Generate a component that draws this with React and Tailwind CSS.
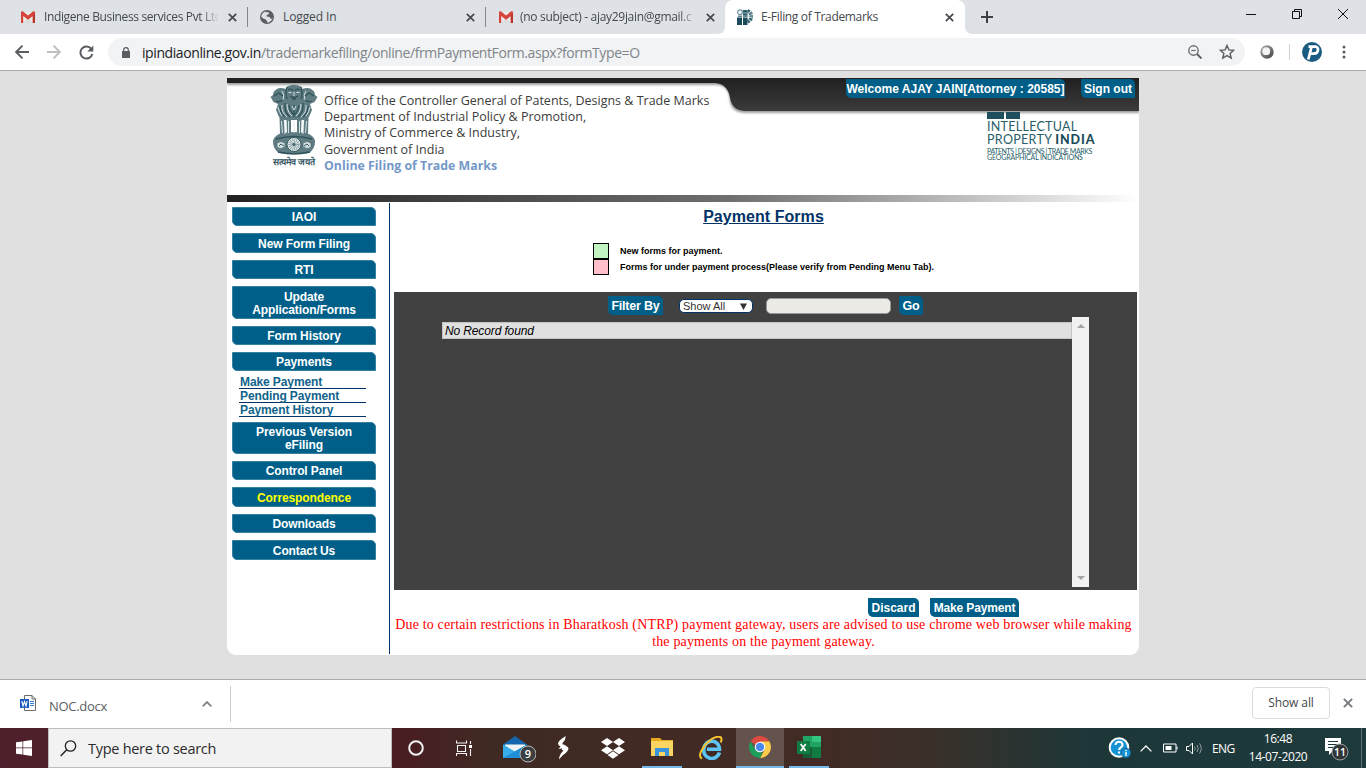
import React from "react";

const pill = "bg-[#005f89] text-white font-bold rounded-tr-[5px] rounded-bl-[5px] whitespace-nowrap text-center h-[19px] pt-px leading-[18px]";

function Gmail() {
  return (
    <svg width="16" height="14" viewBox="0 0 16 14" className="shrink-0">
      <path d="M1 2h14v11H1z" fill="#ececec" />
      <path d="M3 13l5-5 5 5z" fill="#dcdcdc" />
      <path d="M1 2.500v10.500h2.200V6L8 9.800 12.800 6v7H15V2.500C15 1 13.400 1 12.600 1.700L8 5.500 3.400 1.700C2.600 1 1 1 1 2.500z" fill="#d5443a" />
      <path d="M12.800 6v7H15V3z" fill="#b8332a" />
    </svg>
  );
}

function X({ c = "#45494d", w = 9 }) {
  return (
    <svg width={w} height={w} viewBox="0 0 9 9" className="shrink-0">
      <path d="M.8.8l7.400 7.400M8.200.8L.8 8.200" stroke={c} strokeWidth="1.700" />
    </svg>
  );
}

function TabTitle({ children, className }) {
  return <span className={"whitespace-nowrap text-[12px] text-[#45494d] " + className}>{children}</span>;
}

function TabStrip() {
  return (
    <div className="flex h-[34px] bg-[#dee1e6]">
      <div className="flex w-[248px] items-center pl-5">
        <Gmail />
        <TabTitle className="ml-2 w-[175px] tracking-[-0.37px] [mask-image:linear-gradient(to_right,black_90%,transparent)]">Indigene Business services Pvt Ltd</TabTitle>
        <span className="ml-[9px] flex"><X /></span>
        <span className="ml-[10px] h-5 w-px shrink-0 bg-[#85888c]" />
      </div>
      <div className="flex w-[238px] items-center pl-3">
        <svg width="14" height="14" viewBox="0 0 14 14" className="shrink-0">
          <circle cx="7" cy="7" r="7" fill="#5a5e63" />
          <path d="M5.500 1.500C7 3 9.500 1.500 9 3.500 8.500 5 6.500 4.500 6.500 6c0 1 2 .5 3 1s.5 2 1.500 2c.8 0 1.300-.8 1.700-1.700C12.500 10 10 12.600 7.300 12.700 8 11.500 6.500 11 6 10 5.500 8.700 4 9 3 8.200 2 7.400 1.300 7 1.300 6.500 1.500 4 3.300 2.200 5.500 1.500z" fill="#dee1e6" />
        </svg>
        <TabTitle className="ml-[9px] w-[174px] tracking-[-0.1px]">Logged In</TabTitle>
        <span className="ml-[10px] flex"><X /></span>
        <span className="ml-[10px] h-5 w-px shrink-0 bg-[#85888c]" />
      </div>
      <div className="flex w-[239px] items-center pl-3">
        <Gmail />
        <TabTitle className="ml-[6px] w-[177px] tracking-[-0.3px] [mask-image:linear-gradient(to_right,black_90%,transparent)]">(no subject) - ajay29jain@gmail.c</TabTitle>
        <span className="ml-[9px] flex"><X /></span>
      </div>
      <div className="relative flex w-[240px] items-center rounded-t-lg bg-white pl-3">
        <svg width="256" height="8" viewBox="0 0 256 8" className="absolute -left-2 bottom-0"><path d="M8 0v8H0Q8 8 8 0zM248 0v8h8Q248 8 248 0z" fill="#fff" /></svg>
        <svg width="16" height="16" viewBox="0 0 16 16" className="shrink-0">
          <path d="M0 8.500h5V16H0zM6 8.500h4.500V16H6z" fill="#1c4a5a" />
          <path d="M6 1h4.500v7H6z" fill="#2c5d6c" />
          <circle cx="3" cy="3.200" r="2.300" fill="none" stroke="#6d909c" strokeWidth="1.200" />
          <path d="M1 7.200h4" stroke="#35616f" strokeWidth="1.200" />
          <path d="M10.500 2a5.500 5.500 0 010 10.500" fill="none" stroke="#35616f" strokeWidth="3.800" strokeDasharray="2.200 .7" />
          <path d="M6 4h10M6 7h10" stroke="#a9c0c8" strokeWidth=".8" />
        </svg>
        <TabTitle className="ml-2 w-[180px] tracking-[-0.33px]">E-Filing of Trademarks</TabTitle>
        <span className="ml-[4px] flex"><X /></span>
      </div>
      <div className="flex flex-1 items-center pl-4">
        <svg width="12" height="12" viewBox="0 0 12 12"><path d="M6 0v12M0 6h12" stroke="#3c4043" strokeWidth="2" /></svg>
        <div className="mb-[6px] ml-auto mr-[18px] flex items-center">
          <svg width="10" height="10" viewBox="0 0 10 10"><path d="M0 5.500h10" stroke="#111" /></svg>
          <svg width="10" height="10" viewBox="0 0 10 10" className="ml-9"><path d="M.5 2.500h7v7h-7zM2.500 2.500v-2h7v7h-2" fill="none" stroke="#111" /></svg>
          <svg width="10" height="10" viewBox="0 0 10 10" className="ml-9"><path d="M0 0l10 10M10 0L0 10" stroke="#111" /></svg>
        </div>
      </div>
    </div>
  );
}

function Toolbar() {
  return (
    <div className="flex h-[37px] items-center border-b border-[#a9abad] bg-white pl-[15px]">
      <svg width="14" height="14" viewBox="0 0 14 14"><path d="M14 7H1.500M7.500.7L1.200 7l6.300 6.300" fill="none" stroke="#5a5e63" strokeWidth="1.900" /></svg>
      <svg width="14" height="14" viewBox="0 0 14 14" className="ml-[18px]"><path d="M0 7h12.500M6.500.7L12.800 7l-6.300 6.300" fill="none" stroke="#bcbec0" strokeWidth="1.900" /></svg>
      <svg width="15" height="15" viewBox="0 0 15 15" className="ml-[18px]">
        <path d="M12.300 4A6 6 0 1013.300 9" fill="none" stroke="#5a5e63" strokeWidth="2" />
        <path d="M14.300.5v6H8.300z" fill="#5a5e63" />
      </svg>
      <div className="ml-[14px] flex h-7 w-[1137px] items-center rounded-full bg-[#f1f3f4] pl-[14px]">
        <svg width="8" height="11" viewBox="0 0 8 11">
          <path d="M0 4h8v7H0z" fill="#5a5e63" /><path d="M1.700 4.500V3a2.300 2.300 0 014.600 0v1.500" fill="none" stroke="#5a5e63" strokeWidth="1.200" />
        </svg>
        <span className="ml-3 whitespace-nowrap text-[14px] tracking-[-0.41px] text-[#80858a]"><span className="text-[#202124]">ipindiaonline.gov.in</span>/trademarkefiling/online/frmPaymentForm.aspx?formType=O</span>
        <svg width="14" height="14" viewBox="0 0 14 14" className="ml-auto">
          <circle cx="5.500" cy="5.500" r="4.700" fill="none" stroke="#6a6e72" strokeWidth="1.400" /><path d="M9 9l4.500 4.500" stroke="#5a5e63" strokeWidth="1.900" /><path d="M3.200 5.500h4.600" stroke="#6a6e72" strokeWidth="1.200" />
        </svg>
        <svg width="16" height="16" viewBox="0 0 16 16" className="ml-[17px] mr-[10px]">
          <path d="M8 1.500l1.900 4.400 4.800.4-3.600 3.100 1.100 4.700L8 11.600l-4.200 2.500 1.100-4.700L1.300 6.300l4.800-.4z" fill="none" stroke="#5a5e63" strokeWidth="1.400" />
        </svg>
      </div>
      <svg width="14" height="14" viewBox="0 0 14 14" className="ml-[15px]">
        <defs><linearGradient id="ring" x1="0" y1="0" x2="1" y2="1"><stop stopColor="#b0b0b0" /><stop offset="1" stopColor="#3f3f3f" /></linearGradient></defs>
        <circle cx="7" cy="7" r="6.700" fill="url(#ring)" /><circle cx="6.200" cy="6.200" r="3.900" fill="#f4f4f4" />
      </svg>
      <span className="ml-[15px] h-4 w-px bg-[#cfd1d3]" />
      <svg width="20" height="20" viewBox="0 0 20 20" className="ml-3">
        <circle cx="10" cy="10" r="10" fill="#1a5b82" />
        <path d="M6.500 4.600h7c3.700 0 3.400 7-1.500 7H8M9.500 5L6.300 17.500" fill="none" stroke="#fff" strokeWidth="2.700" />
      </svg>
      <svg width="4" height="14" viewBox="0 0 4 14" className="ml-[20px]"><g fill="#5a5e63"><circle cx="2" cy="2" r="1.500" /><circle cx="2" cy="7" r="1.500" /><circle cx="2" cy="12" r="1.500" /></g></svg>
    </div>
  );
}

function Emblem() {
  return (
    <svg width="48" height="72" viewBox="0 0 48 72">
      <g fill="#5f7c82">
        <path d="M17 2.500Q24-1 31 2.500l1.500 5-1 9-3.500 4h-8l-3.500-4-1-9z" />
        <path d="M16 5q-6-2-9 0-4 2-4 6l-2.500 2 3 5 4.500 2-2 6 3 7 5 3h20l5-3 3-7-2-6 4.500-2 3-5L45 11q0-4-4-6-3-2-9 0l-2 13H18z" />
        <path d="M9.500 32h4l1.500 18h-5zM16.500 34h4.500v16h-4zM27 34h4.500L31 50h-4zM34.500 32h4L38 50h-5z" />
        <path d="M9 50q15-4 30 0 6 3 6 8 0 7-6 11-15 3-30 0-6-4-6-11 0-5 6-8z" />
      </g>
      <g fill="none" stroke="#2f525a" strokeWidth="1.300">
        <path d="M18 6q3-2 5 .5M25 6.500Q27 4 30 6M20 12q4 3 8 0M22 15h4M17 3q-2 5 0 12M31 3q2 5 0 12" />
        <path d="M4 12l5-3 4 3M44 12l-5-3-4 3M6 17q5 2 7-2M42 17q-5 2-7-2" />
        <path d="M15 19q-1 9 5 14M33 19q1 9-5 14M19 21q1 7 5 10 4-3 5-10M10 22q0 7 5 11M38 22q0 7-5 11M24 21v12" />
        <path d="M6 55q18-5 36 0M8 68q16 3.500 32 0" strokeWidth="1.700" />
      </g>
      <g fill="none" stroke="#e4edee" strokeWidth=".9">
        <path d="M18.500 8.500h3M26.500 8.500h3M24 8v4M12 7q3 4 1 9M36 7q-3 4-1 9M17 20q0 8 5 12M31 20q0 8-5 12M12 21q-1 7 5 12M36 21q1 7-5 12M8 23q1 5 4 9M40 23q-1 5-4 9M22 22l2 4 2-4" />
        <path d="M11.500 37l1 12M18.500 37v12M29.500 37v12M36.500 37l-1 12M15 36v14M33 36v14M24 36v13" />
      </g>
      <circle cx="24" cy="60.500" r="7" fill="#e5ecee" stroke="#35585f" />
      <circle cx="24" cy="60.500" r="3.800" fill="none" stroke="#8ba3a8" strokeWidth="4" strokeDasharray=".8 .8" />
      <circle cx="24" cy="60.500" r="1.700" fill="#48696f" />
      <path d="M7 59q4-3 8 0v4q-5 3-8 0zM41 59q-4-3-8 0v4q5 3 8 0z" fill="#d5e0e2" stroke="#48696f" strokeWidth=".7" />
      <path d="M9 62l2-2 3 2M39 62l-2-2-3 2" stroke="#35585f" fill="none" />
    </svg>
  );
}

function Header() {
  return (
    <div className="relative h-[124px] w-[912px]">
      <svg width="912" height="40" viewBox="0 0 912 40" className="absolute left-0 top-0">
        <defs>
          <linearGradient id="bar" x1="0" y1="0" x2="0" y2="1"><stop stopColor="#202020" /><stop offset="1" stopColor="#3b3b3b" /></linearGradient>
          <filter id="soft" x="-2%" y="-20%" width="104%" height="150%"><feGaussianBlur stdDeviation="1.200" /></filter>
        </defs>
        <path d="M0 0H912V35H519Q505 35 503 24Q502 7 489 7H0z" fill="#9b9b9b" filter="url(#soft)" />
        <path d="M0 0H912V33H517Q505 32 503 20Q501 6 488 5H0z" fill="url(#bar)" />
      </svg>
      <div className="relative flex">
        <div className="ml-[43px] mt-[6px] flex w-[48px] flex-col items-center">
          <Emblem />
          <span className="whitespace-nowrap text-[9px] leading-[12px] font-bold text-[#35585f]">सत्यमेव जयते</span>
        </div>
        <div className="ml-[6px] mt-[15px] w-[400px] whitespace-nowrap font-['Open_Sans'] text-[12.5px] leading-[16.2px] text-[#3c3c3c]">
          <div>Office of the Controller General of Patents, Designs &amp; Trade Marks</div>
          <div>Department of Industrial Policy &amp; Promotion,</div>
          <div>Ministry of Commerce &amp; Industry,</div>
          <div>Government of India</div>
          <div className="text-[12.35px] font-bold text-[#7498c8]">Online Filing of Trade Marks</div>
        </div>
        <div className="ml-auto flex flex-col pr-[4px] pt-px">
          <div className="flex justify-end gap-[16px] text-[12px]">
            <span className={pill + " w-[219px]"}>Welcome AJAY JAIN[Attorney : 20585]</span>
            <span className={pill + " w-[54px]"}>Sign out</span>
          </div>
          <div className="ml-[141px] mt-[14px] w-[112px] whitespace-nowrap font-[Lato] text-[#286069]">
            <div className="flex gap-[2px]"><span className="h-[7px] w-[17px] bg-[#1f4f5c]" /><span className="h-[7px] w-[14px] bg-[#1f4f5c]" /></div>
            <div className="mt-px text-[12.5px] leading-[13px] tracking-[0.28px]">INTELLECTUAL</div>
            <div className="text-[12.5px] leading-[13px] tracking-[0.32px]">PROPERTY <b className="font-black tracking-[0.9px] text-[#1c4c59]">INDIA</b></div>
            <div className="mt-[2px] text-[7px] leading-[6px] tracking-[-0.42px]">PATENTS | DESIGNS | TRADE MARKS</div>
            <div className="text-[7px] leading-[6px] tracking-[-0.15px]">GEOGRAPHICAL INDICATIONS</div>
          </div>
        </div>
      </div>
      <div className="absolute bottom-0 left-0 h-[7px] w-full bg-linear-to-r from-[#222] via-[#6f6f6f] via-55% to-white" />
    </div>
  );
}

function MenuItem({ children, className = "h-[19px]" }) {
  return (
    <div className={"mb-[7px] flex items-center justify-center rounded-tr-[5px] rounded-bl-[5px] border border-[#3580a1] bg-[#005f89] text-center text-[12px] font-bold leading-[13px] tracking-[-0.1px] text-white " + className}>
      <span className="translate-y-[0.5px]">{children}</span>
    </div>
  );
}

function Sidebar() {
  const link = "h-[14px] border-b border-[#003366] pl-px text-[12px] font-bold leading-[14px] tracking-[-0.1px] text-[#11638b]";
  return (
    <div className="ml-[5px] w-[144px] pt-[5px]">
      <MenuItem>IAOI</MenuItem>
      <MenuItem className="h-[20px]">New Form Filing</MenuItem>
      <MenuItem>RTI</MenuItem>
      <MenuItem className="h-[33px]">Update<br />Application/Forms</MenuItem>
      <MenuItem>Form History</MenuItem>
      <MenuItem>Payments</MenuItem>
      <div className="mb-[5px] ml-[7px] -mt-[4px] w-[127px] pt-px">
        <div className={link}>Make Payment</div>
        <div className={link}>Pending Payment</div>
        <div className={link}>Payment History</div>
      </div>
      <MenuItem className="h-[32px]">Previous Version<br />eFiling</MenuItem>
      <MenuItem>Control Panel</MenuItem>
      <MenuItem className="h-[20px] text-[#ffff00]!">Correspondence</MenuItem>
      <MenuItem>Downloads</MenuItem>
      <MenuItem className="h-[20px]">Contact Us</MenuItem>
    </div>
  );
}

function Main() {
  return (
    <div className="ml-[4px] w-[743px]">
      <h1 className="mt-[5px] pr-[4px] text-center text-[16px] font-bold leading-[20px] tracking-[0.05px] text-[#003366] underline">Payment Forms</h1>
      <div className="ml-[199px] mt-[16px] text-[9px] font-bold leading-4 text-black">
        <div className="flex"><span className="h-4 w-4 border border-black bg-[#c1f4c1]" /><span className="ml-[11px]">New forms for payment.</span></div>
        <div className="flex"><span className="h-4 w-4 border border-black bg-[#ffc0cb]" /><span className="ml-[11px]">Forms for under payment process(Please verify from Pending Menu Tab).</span></div>
      </div>
      <div className="mt-[17px] h-[298px] bg-[#414141]">
        <div className="flex h-[25px] items-center pl-[214px] pt-[3px]">
          <span className={pill + " w-[55px] text-[12.5px] tracking-[-0.2px] -mt-px"}>Filter By</span>
          <div className="ml-[16px] flex h-[14px] w-[74px] items-center rounded-[5px] border border-[#003366] bg-white pl-[3px] text-[11px] leading-[12px] text-[#333]">
            <span className="whitespace-nowrap">Show All</span>
            <svg width="7" height="7" viewBox="0 0 7 7" className="ml-auto mr-[5px]"><path d="M0 .5h7L3.500 7z" fill="#333" /></svg>
          </div>
          <div className="ml-[13px] h-4 w-[125px] rounded-[5px] border border-[#9a9a98] bg-[#ebeae4]" />
          <span className={pill + " ml-[8px] w-[24px] text-[12.5px] tracking-[-0.2px] -mt-px"}>Go</span>
        </div>
        <div className="ml-[48px] flex h-[270px]">
          <div className="mt-[5px] h-[17px] w-[630px] border border-[#c4c4c4] bg-[#e0e0e0] pl-[2px] text-[12px] italic leading-[16px] tracking-[-0.13px] text-black">No Record found</div>
          <div className="flex w-[17px] flex-col items-center justify-between bg-[#f1f1f1] py-[7px]">
            <svg width="8" height="4" viewBox="0 0 8 4"><path d="M0 4h8L4 0z" fill="#a3a3a3" /></svg>
            <svg width="8" height="4" viewBox="0 0 8 4"><path d="M0 0h8L4 4z" fill="#a3a3a3" /></svg>
          </div>
        </div>
      </div>
      <div className="mt-[8px] flex gap-[11px] pl-[474px] text-[12px]">
        <span className={pill + " w-[51px]"}>Discard</span>
        <span className={pill + " w-[89px] tracking-[-0.15px]"}>Make Payment</span>
      </div>
      <p className="-ml-1 -mt-px whitespace-nowrap text-center font-['Liberation_Serif'] text-[14px] leading-[17px] tracking-[0.165px] text-[#ff0000]">
        Due to certain restrictions in Bharatkosh (NTRP) payment gateway, users are advised to use chrome web browser while making<br />the payments on the payment gateway.
      </p>
    </div>
  );
}

function Downloads() {
  return (
    <div className="flex h-[49px] items-center border-t border-[#a9abad] bg-white font-['Open_Sans']">
      <svg width="16" height="16" viewBox="0 0 16 16" className="mb-[3px] ml-5">
        <path d="M4.500.5h7.500l3.500 3.500v11.500h-11z" fill="#fff" stroke="#6b6b6b" /><path d="M12 .5v3.500h3.500" fill="none" stroke="#6b6b6b" />
        <path d="M10 6.500h4M10 8.500h4M10 10.500h4" stroke="#2b7cd3" /><path d="M0 4h9v9H0z" fill="#185abd" />
        <path d="M1.800 6l1.200 5 1.500-4.500L6 11l1.200-5" fill="none" stroke="#fff" strokeWidth="1.100" />
      </svg>
      <span className="ml-[13px] mt-[6px] w-[60px] text-[13px] tracking-[-0.3px] text-[#5a5e63]">NOC.docx</span>
      <svg width="10" height="6" viewBox="0 0 10 6" className="ml-[93px]"><path d="M.7 5.300L5 1l4.300 4.300" fill="none" stroke="#808488" strokeWidth="1.800" /></svg>
      <span className="ml-[18px] h-9 w-px bg-[#c9cbcd]" />
      <span className="ml-auto mb-[2px] flex h-8 w-[78px] items-center justify-center rounded border border-[#dadce0] text-[12px] font-medium tracking-[-0.1px] text-[#45494d]">Show all</span>
      <span className="ml-[13px] mr-[13px] flex pb-[2px]"><X c="#75797d" w={10} /></span>
    </div>
  );
}

const cell = "flex h-10 w-12 items-center justify-center";

function Taskbar() {
  return (
    <div className="flex h-10 items-center bg-[linear-gradient(to_right,#4d202b_0%,#491c22_29%,#3f2a23_36%,#422b24_60%,#3a3029_68%,#1d3739_80%,#1f3a3c_100%)] text-white">
      <div className={cell}>
        <svg width="16" height="16" viewBox="0 0 16 16"><path d="M0 2.300l6.500-.9v6.200H0zM7.200 1.300L16 0v7.600H7.200zM0 8.300h6.500v6.200L0 13.700zM7.200 8.300H16V16l-8.800-1.300z" fill="#fff" /></svg>
      </div>
      <div className="flex h-10 w-[344px] items-center border border-[#bdbdbd] bg-[#f2f2f2] pl-[11px] text-[#2b2b2b]">
        <svg width="17" height="17" viewBox="0 0 17 17"><circle cx="10.500" cy="6" r="5.200" fill="none" stroke="#222" strokeWidth="1.300" /><path d="M6.700 9.800L.7 16" stroke="#222" strokeWidth="1.500" /></svg>
        <span className="ml-[11px] mt-[2px] whitespace-nowrap text-[14.5px] tracking-[-0.28px]">Type here to search</span>
      </div>
      <div className={cell}><svg width="16" height="16" viewBox="0 0 16 16"><circle cx="8" cy="8" r="6.800" fill="none" stroke="#f3f3f3" strokeWidth="2" /></svg></div>
      <div className={cell}>
        <svg width="17" height="17" viewBox="0 0 17 17"><path d="M.5.5V3h10V.5M1.500 5.500h8v6h-8zM.5 16v-2.500h10V16M14.500 1v3M14.500 9v7" fill="none" stroke="#f3f3f3" strokeWidth="1.100" /><path d="M13 5h3v3h-3z" fill="#fff" /></svg>
      </div>
      <div className="flex h-10 w-[70px] items-center pl-[14px]">
        <svg width="34" height="28" viewBox="0 0 34 28" className="mt-px">
          <path d="M1 9.500L13 1l12 8.500V14H1z" fill="#1466ac" /><path d="M3 9.500h20v9H3z" fill="#f2f5f7" /><path d="M1 9.500l12 7 12-7V23H1z" fill="#38aee8" /><path d="M1 23l24-13.500V23z" fill="#1f8fd8" />
          <circle cx="26" cy="19" r="8" fill="#3c3e40" stroke="#b6b6b6" /><text x="26" y="23" textAnchor="middle" fontFamily="Open Sans" fontSize="11" fontWeight="600" fill="#fff">9</text>
        </svg>
      </div>
      <div className="flex h-10 w-[26px] items-center justify-start"><svg width="12" height="24" viewBox="0 0 12 24" className="-ml-px shrink-0"><path d="M8.800 0Q2 4 1 7.200q0 2 3 3.600 2 1 .5 2.700l2.800 1.200Q9 12.500 7 11q-3-2-1-4.500Q8.500 4 8.800 0z" fill="#fff" /><path d="M5.500 8q6 2.500 6 4.500-.2 3-6 7L2 23.500Q2 19 6 15q1.500-1.600-.5-2.800L1.500 13q3-3.500 4-5z" fill="#fff" /></svg></div>
      <div className="flex h-10 w-[58px] items-center pl-[17px]"><svg width="24" height="21" viewBox="0 0 24 21"><path d="M6 0l6 4-6 4-6-4zM18 0l6 4-6 4-6-4zM6 8.200l6 4-6 4-6-4zM18 8.200l6 4-6 4-6-4zM12 13.300l5.500 3.700L12 20.700 6.500 17z" fill="#fff" /></svg></div>
      <div className="flex h-10 w-10 items-center justify-center border-b-2 border-[#76b9ed]">
        <svg width="22" height="18" viewBox="0 0 22 18"><path d="M0 0h9l2 2h11v16H0z" fill="#e9a91f" /><path d="M0 3h22v15H0z" fill="#fcd462" /><path d="M4 10h14v8h-4v-4H8v4H4z" fill="#3b93dc" /></svg>
      </div>
      <div className="flex h-10 w-[54px] items-center pl-[17px]">
        <svg width="24" height="24" viewBox="0 0 24 24" className="shrink-0">
          <path d="M20.500 16.500A8 8 0 115 12.500a7.700 7.700 0 0115.500.800H8" fill="none" stroke="#5cc5f5" strokeWidth="3.600" />
          <path d="M3 22.500C-1.500 20.500 2.500 12 9 6S21.500-.5 22.500 2.500q.3 1.500-.8 4" fill="none" stroke="#f7c52b" strokeWidth="2" />
        </svg>
      </div>
      <div className="flex h-10 w-12 items-center justify-center border-b-2 border-[#76b9ed] bg-[#64524d]">
        <svg width="22" height="22" viewBox="0 0 22 22"><path d="M11 11L1.500 5.500A11 11 0 0120.500 5.500z" fill="#dd4b3e" /><path d="M11 11V5.500h9.500A11 11 0 0111 22l4.700-8.300z" fill="#fccd48" /><path d="M1.500 5.500L6.300 13.700 11 16.500h2.500L11 22A11 11 0 011.500 5.500z" fill="#1c9f5b" /><circle cx="11" cy="11" r="5.300" fill="#fff" /><circle cx="11" cy="11" r="4.200" fill="#4b88ee" /></svg>
      </div>
      <div className="ml-[5px] flex h-10 w-10 items-center justify-center border-b-2 border-[#76b9ed]">
        <svg width="24" height="22" viewBox="0 0 24 22"><path d="M6 0h9v11H6z" fill="#21a366" /><path d="M15 0h9v6h-9z" fill="#33c481" /><path d="M15 6h9v5h-9z" fill="#21a366" /><path d="M6 11h9v11H6z" fill="#185c37" /><path d="M15 11h9v11h-9z" fill="#107c41" /><path d="M0 5h13v13H0z" fill="#107c41" /><path d="M3.700 8l5 7M8.700 8l-5 7" stroke="#fff" strokeWidth="1.700" /></svg>
      </div>
      <div className="ml-auto flex h-10 items-center whitespace-nowrap text-[12px]">
        <svg width="23" height="22" viewBox="0 0 23 22"><circle cx="11" cy="10.500" r="9.300" fill="#1493d4" stroke="#fff" strokeWidth="2" /><path d="M7.500 8c0-4.300 7-4.200 7 0 0 2.500-3.500 2.300-3.500 5M11 14.500v2" fill="none" stroke="#fff" strokeWidth="2.100" /><circle cx="18" cy="16" r="4.800" fill="#1493d4" stroke="#1d4a5e" strokeWidth=".6" /><path d="M18 13v1.200M18 15v4" stroke="#fff" strokeWidth="1.400" /></svg>
        <svg width="12" height="7" viewBox="0 0 12 7" className="ml-[9px]"><path d="M.6 6.400L6 1l5.400 5.400" fill="none" stroke="#fff" strokeWidth="1.300" /></svg>
        <svg width="15" height="10" viewBox="0 0 15 10" className="ml-[11px]"><path d="M.5 1h12.500v8H.5z" fill="none" stroke="#fff" /><path d="M13.500 3.500h1v3h-1z" fill="#fff" /><path d="M2.500 3h6v4h-6z" fill="#fff" /></svg>
        <svg width="17" height="13" viewBox="0 0 17 13" className="ml-[8px]"><path d="M.5 4.500H3L6.500 1v11L3 8.500H.5z" fill="none" stroke="#fff" /><path d="M8.500 4.500q1.500 2 0 4M11 3q2.500 3.500 0 7M13.500 1.500q3.500 5 0 10" fill="none" stroke="#91a0a1" /></svg>
        <span className="ml-[9px] mt-px w-[24px] tracking-[-0.6px]">ENG</span>
        <div className="ml-[11px] w-[62px] text-center leading-[18px] tracking-[-0.4px]"><div>16:48</div><div>14-07-2020</div></div>
        <svg width="26" height="24" viewBox="0 0 26 24" className="ml-[15px] mt-[4px]"><path d="M1 0h16v13H9l-4 4v-4H1z" fill="#fff" /><path d="M4 3.500h10M4 6.500h10M4 9.500h7" stroke="#1f3a3c" /><circle cx="16" cy="14" r="8" fill="#323638" stroke="#9a9e9f" /><text x="16" y="18" textAnchor="middle" fontFamily="Open Sans" fontSize="10.500" fontWeight="600" fill="#fff">11</text></svg>
        <span className="ml-[11px] mr-[4px] h-10 w-px bg-[#60706f]" />
      </div>
    </div>
  );
}

export default function App() {
  return (
    <div className="flex h-[768px] w-[1366px] flex-col overflow-hidden bg-[#e0e0e0] font-['Open_Sans',sans-serif]">
      <TabStrip />
      <Toolbar />
      <div className="h-[608px] pl-[227px] pt-[7px] font-['Liberation_Sans',sans-serif]">
        <div className="h-[577px] w-[912px] rounded-b-[9px] bg-white">
          <Header />
          <div className="flex h-[453px]">
            <Sidebar />
            <div className="ml-[13px] mt-px h-[451px] w-px bg-[#003366]" />
            <Main />
          </div>
        </div>
      </div>
      <Downloads />
      <Taskbar />
    </div>
  );
}
